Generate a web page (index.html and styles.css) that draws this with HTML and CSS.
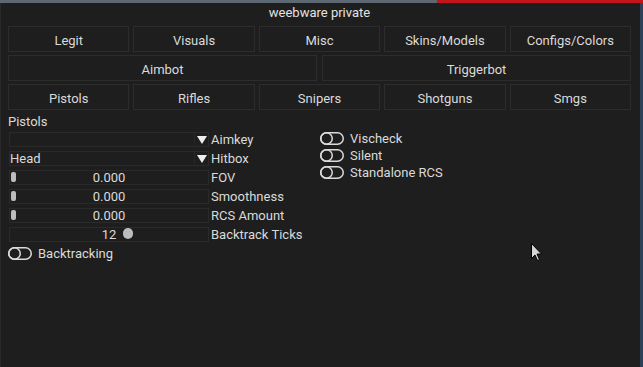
FILE: index.html
```html
<!DOCTYPE html>
<html lang="en">
<head>
  <meta charset="UTF-8" />
  <title>weebware private</title>
  <link rel="stylesheet" href="styles.css">
</head>
<body>
  <div class="window">
    <div class="title">weebware private</div>

    <nav class="tabs">
      <button>Legit</button>
      <button>Visuals</button>
      <button>Misc</button>
      <button>Skins/Models</button>
      <button>Configs/Colors</button>
    </nav>
    <nav class="tabs tabs-wide">
      <button>Aimbot</button>
      <button>Triggerbot</button>
    </nav>
    <nav class="tabs">
      <button>Pistols</button>
      <button>Rifles</button>
      <button>Snipers</button>
      <button>Shotguns</button>
      <button>Smgs</button>
    </nav>

    <div class="content">
      <div class="col-left">
        <div class="section-title">Pistols</div>

        <div class="row">
          <div class="field combo"><span></span><span class="combo-arrow"><i></i></span></div>
          <label>Aimkey</label>
        </div>
        <div class="row">
          <div class="field combo"><span>Head</span><span class="combo-arrow"><i></i></span></div>
          <label>Hitbox</label>
        </div>
        <div class="row">
          <div class="field slider"><span class="thumb" style="left: 1px"></span>0.000</div>
          <label>FOV</label>
        </div>
        <div class="row">
          <div class="field slider"><span class="thumb" style="left: 1px"></span>0.000</div>
          <label>Smoothness</label>
        </div>
        <div class="row">
          <div class="field slider"><span class="thumb" style="left: 1px"></span>0.000</div>
          <label>RCS Amount</label>
        </div>
        <div class="row">
          <div class="field slider"><span class="thumb round" style="left: 113px"></span>12</div>
          <label>Backtrack Ticks</label>
        </div>
        <div class="row toggle">
          <svg class="toggle-icon" width="24" height="13" viewBox="0 0 24 13"><rect x="0.75" y="0.75" width="22.5" height="11.5" rx="5.75"/><circle cx="6.5" cy="6.5" r="5.75"/></svg>
          <span>Backtracking</span>
        </div>
      </div>

      <div class="col-right">
        <div class="toggle">
          <svg class="toggle-icon" width="24" height="13" viewBox="0 0 24 13"><rect x="0.75" y="0.75" width="22.5" height="11.5" rx="5.75"/><circle cx="6.5" cy="6.5" r="5.75"/></svg>
          <span>Vischeck</span>
        </div>
        <div class="toggle">
          <svg class="toggle-icon" width="24" height="13" viewBox="0 0 24 13"><rect x="0.75" y="0.75" width="22.5" height="11.5" rx="5.75"/><circle cx="6.5" cy="6.5" r="5.75"/></svg>
          <span>Silent</span>
        </div>
        <div class="toggle">
          <svg class="toggle-icon" width="24" height="13" viewBox="0 0 24 13"><rect x="0.75" y="0.75" width="22.5" height="11.5" rx="5.75"/><circle cx="6.5" cy="6.5" r="5.75"/></svg>
          <span>Standalone RCS</span>
        </div>
      </div>
    </div>

    <svg class="cursor" width="13" height="20" viewBox="0 0 13 20"><path d="M0.5 0.5 L0.5 15.5 L4 12 L6.5 17.5 L8.5 16.5 L6 11 L10.5 11 Z"/></svg>
  </div>
</body>
</html>
```

FILE: styles.css
```css
body {
  margin: 0;
  height: 367px;
  overflow: hidden;
  background:
    linear-gradient(to right, #5d6873 0 437px, #c3151b 437px) top left / 100% 3px no-repeat,
    #2c4058;
  font-family: Roboto, "Liberation Sans", sans-serif;
  font-size: 13px;
  color: #dadada;
}

.window {
  position: relative;
  margin-top: 3px;
  width: 640px;
  height: 364px;
  box-sizing: border-box;
  padding: 0 9px 0 7px;
  background: #1e1e1e;
  border-left: 1px solid #2a2a2a;
}

.title {
  height: 23px;
  line-height: 20px;
  text-align: center;
  color: #e2e2e2;
}

.tabs {
  display: flex;
  gap: 4px;
  height: 26px;
  margin-bottom: 3px;
}

.tabs-wide {
  gap: 5px;
}

.tabs button {
  flex: 1;
  padding: 2px 0 0;
  background: #1e1e1e;
  border: 1px solid #2c2c2c;
  color: #dadada;
  font: inherit;
}

.content {
  display: flex;
}

.col-left {
  width: 312px;
}

.section-title {
  height: 17px;
  line-height: 17px;
}

.row {
  display: flex;
  align-items: center;
  height: 19px;
}

.row label {
  margin-left: 2px;
}

.field {
  position: relative;
  width: 200px;
  height: 15px;
  margin-left: 1px;
  box-sizing: border-box;
  border: 1px solid #2a2a2a;
  line-height: 13px;
}

.combo {
  display: flex;
  justify-content: space-between;
}

.combo-arrow {
  display: flex;
  align-items: center;
  justify-content: center;
  width: 13px;
  border-left: 1px solid #262626;
}

.combo-arrow i {
  width: 0;
  height: 0;
  border-left: 5px solid transparent;
  border-right: 5px solid transparent;
  border-top: 8px solid #eeeeee;
}

.slider {
  text-align: center;
}

.thumb {
  position: absolute;
  top: 1px;
  width: 5px;
  height: 10px;
  border-radius: 2px;
  background: #bdbdbd;
}

.thumb.round {
  width: 10px;
  height: 11px;
  top: 0;
  border-radius: 5px;
}

.toggle {
  display: flex;
  align-items: center;
  gap: 6px;
}

.toggle-icon {
  fill: none;
  stroke: #dcdcdc;
  stroke-width: 1.5;
}

.col-right {
  padding-top: 17px;
}

.col-right .toggle {
  height: 17px;
}

.cursor {
  position: absolute;
  left: 530px;
  top: 240px;
  fill: #d4d4d4;
  stroke: #000;
  stroke-width: 1;
}
```
